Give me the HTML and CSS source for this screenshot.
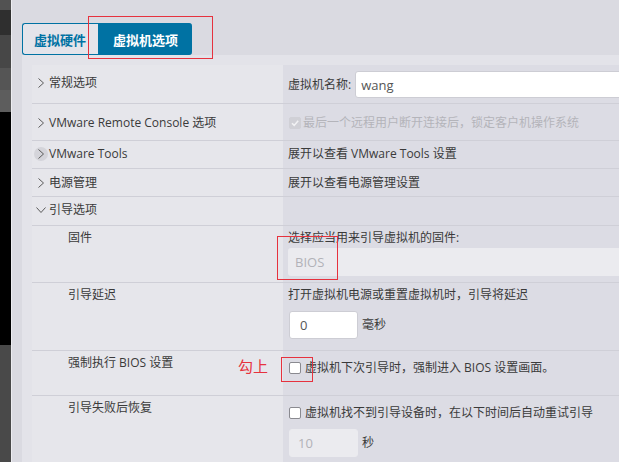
FILE: index.html
```html
<!DOCTYPE html>
<html lang="zh-CN">

<head>
    <meta charset="UTF-8">
    <title>编辑设置 - 虚拟机选项</title>
    <link rel="stylesheet" href="styles.css">
</head>

<body>
    <div class="page">
        <div class="side">
            <div class="side-a"></div>
            <div class="side-b"></div>
            <div class="side-c"></div>
            <div class="side-d"></div>
            <div class="side-e"></div>
            <div class="side-f"></div>
            <div class="side-g"></div>
        </div>

        <div class="main">
            <div class="tabs">
                <button class="tab">虚拟硬件</button>
                <button class="tab tab-active">虚拟机选项</button>
            </div>

            <div class="panel">
                <div class="row r1">
                    <div class="cell-l">
                        <span class="lbl"><span class="chev"><svg width="6" height="10" viewBox="0 0 6 10"><path d="M0.5 0.5 L5.5 5 L0.5 9.5" /></svg></span>常规选项</span>
                    </div>
                    <div class="cell-r">
                        <span class="field-name">虚拟机名称:</span>
                        <input class="txt txt-name" type="text" value="wang">
                    </div>
                </div>

                <div class="row r2">
                    <div class="cell-l">
                        <span class="lbl"><span class="chev"><svg width="6" height="10" viewBox="0 0 6 10"><path d="M0.5 0.5 L5.5 5 L0.5 9.5" /></svg></span>VMware Remote Console 选项</span>
                    </div>
                    <div class="cell-r">
                        <span class="check-line muted">
                            <span class="box box-on"><svg width="10" height="10" viewBox="0 0 10 10"><path d="M2 5.2 L4.2 7.4 L8.2 2.8" /></svg></span>
                            最后一个远程用户断开连接后，锁定客户机操作系统
                        </span>
                    </div>
                </div>

                <div class="row r3">
                    <div class="cell-l">
                        <span class="lbl"><span class="chev chev-hover"><svg width="6" height="10" viewBox="0 0 6 10"><path d="M0.5 0.5 L5.5 5 L0.5 9.5" /></svg></span>VMware Tools</span>
                    </div>
                    <div class="cell-r">展开以查看 VMware Tools 设置</div>
                </div>

                <div class="row r4">
                    <div class="cell-l">
                        <span class="lbl"><span class="chev"><svg width="6" height="10" viewBox="0 0 6 10"><path d="M0.5 0.5 L5.5 5 L0.5 9.5" /></svg></span>电源管理</span>
                    </div>
                    <div class="cell-r">展开以查看电源管理设置</div>
                </div>

                <div class="row r5">
                    <div class="cell-l">
                        <span class="lbl"><span class="chev"><svg width="10" height="6" viewBox="0 0 10 6"><path d="M0.5 0.5 L5 5.5 L9.5 0.5" /></svg></span>引导选项</span>
                    </div>
                    <div class="cell-r"></div>
                </div>

                <div class="row r6">
                    <div class="cell-l sub">固件</div>
                    <div class="cell-r">
                        <div class="line">选择应当用来引导虚拟机的固件:</div>
                        <div class="select">BIOS</div>
                    </div>
                </div>

                <div class="row r7">
                    <div class="cell-l sub">引导延迟</div>
                    <div class="cell-r">
                        <div class="line">打开虚拟机电源或重置虚拟机时，引导将延迟</div>
                        <div class="unit-row">
                            <input class="txt txt-small" type="text" value="0">
                            <span>毫秒</span>
                        </div>
                    </div>
                </div>

                <div class="row r8">
                    <div class="cell-l sub">强制执行 BIOS 设置</div>
                    <div class="cell-r">
                        <span class="check-line">
                            <span class="box"></span>虚拟机下次引导时，强制进入 BIOS 设置画面。
                        </span>
                    </div>
                </div>

                <div class="row r9">
                    <div class="cell-l sub">引导失败后恢复</div>
                    <div class="cell-r">
                        <span class="check-line">
                            <span class="box"></span>虚拟机找不到引导设备时，在以下时间后自动重试引导
                        </span>
                        <div class="unit-row">
                            <input class="txt txt-small txt-off" type="text" value="10" disabled>
                            <span>秒</span>
                        </div>
                    </div>
                </div>
            </div>
        </div>

        <!-- red annotations drawn over the screenshot -->
        <div class="mark mark-tab"></div>
        <div class="mark mark-bios"></div>
        <div class="mark mark-check"></div>
        <div class="mark-note">勾上</div>
    </div>
</body>

</html>
```

FILE: styles.css
```css
:root {
    --page-bg: #dadae1;
    --panel-bg: #e3e3e9;
    --cell-left: #e6e6eb;
    --cell-right: #dcdce4;
    --row-line: #cfcfd7;
    --text: #3a3a3a;
    --text-muted: #b4b4ba;
    --blue: #0072a3;
    --red: #e6323e;
}

html,
body {
    margin: 0;
    padding: 0;
    height: 462px;
    overflow: hidden;
    background: var(--page-bg);
}

body {
    font-family: "Open Sans", "Noto Sans CJK SC", sans-serif;
    font-size: 12px;
    color: var(--text);
}

.page {
    position: relative;
    display: flex;
    width: 619px;
    height: 462px;
    overflow: hidden;
}

/* dark strip on the far left */
.side {
    width: 11px;
    flex: none;
    display: flex;
    flex-direction: column;
}

.side-a { height: 10px; background: #525252; }
.side-b { height: 25px; background: #2f2f2f; }
.side-c { height: 33px; background: #474747; }
.side-d { height: 22px; background: #555555; }
.side-e { height: 22px; background: #5d5d5d; }
.side-f { height: 233px; background: #000; }
.side-g { flex: 1; background: #494949; }

.main {
    flex: none;
    width: 720px;
    border-left: 1px solid #ededf1;
    padding: 23px 0 0 10px;
    box-sizing: border-box;
}

.tabs {
    display: flex;
    height: 32px;
}

.tab {
    font-family: "Noto Sans CJK SC", sans-serif;
    font-size: 13px;
    font-weight: 700;
    height: 32px;
    margin: 0;
    padding: 0 12px 0 11px;
    border: 1px solid var(--blue);
    border-right: none;
    border-radius: 3px 0 0 3px;
    background: #e4e4ea;
    color: var(--blue);
    cursor: pointer;
}

.tab-active {
    padding: 0 14px;
    border-radius: 0 3px 3px 0;
    background: var(--blue);
    color: #fff;
}

.panel {
    background: var(--panel-bg);
    padding: 10px 0 0 10px;
    height: 400px;
}

.row {
    display: grid;
    grid-template-columns: 251px 1fr;
    border-bottom: 1px solid var(--row-line);
    line-height: 18px;
}

.cell-l {
    background: var(--cell-left);
    padding-left: 2px;
}

.cell-r {
    background: var(--cell-right);
    padding-left: 5px;
    padding-right: 10px;
}

.lbl {
    display: flex;
    align-items: center;
    height: 18px;
    gap: 1px;
}

.chev {
    width: 14px;
    height: 14px;
    display: flex;
    align-items: center;
    justify-content: center;
    border-radius: 50%;
}

.chev svg path {
    fill: none;
    stroke: #5a5a5a;
    stroke-width: 1;
}

.chev-hover {
    background: #d4d4da;
}

.sub {
    padding-left: 36px;
}

/* row spacing */
.r1 .cell-l { padding-top: 9px; }
.r1 .cell-r {
    display: flex;
    align-items: center;
    padding-top: 6px;
    padding-bottom: 5px;
}

.r2 .cell-l,
.r2 .cell-r { padding-top: 10px; padding-bottom: 8px; }

.r3 .cell-l,
.r3 .cell-r { padding-top: 4px; padding-bottom: 5px; }

.r4 .cell-l,
.r4 .cell-r { padding-top: 5px; padding-bottom: 4px; }

.r5 .cell-l,
.r5 .cell-r { padding-top: 4px; padding-bottom: 6px; }

.r6 .cell-l,
.r7 .cell-l,
.r8 .cell-l,
.r9 .cell-l { padding-top: 3px; }

.r6 .cell-r { padding-top: 3px; padding-bottom: 6px; }
.r7 .cell-r { padding-top: 3px; padding-bottom: 11px; }
.r8 .cell-r { padding-top: 8px; padding-bottom: 18px; }
.r9 .cell-r { padding-top: 8px; padding-bottom: 20px; }

.field-name {
    margin-right: 4px;
}

.txt {
    box-sizing: border-box;
    font-family: inherit;
    font-size: 13px;
    color: #555;
    background: #fff;
    border: 1px solid #cdcdd4;
    border-radius: 3px;
    outline: none;
    margin: 0;
}

.txt-name {
    flex: 1;
    height: 27px;
    padding: 0 5px;
}

.select {
    box-sizing: border-box;
    margin-top: 1px;
    height: 28px;
    line-height: 28px;
    padding-left: 7px;
    background: #ebebef;
    border-radius: 3px;
    color: #b2b2b8;
    font-size: 13px;
}

.unit-row {
    display: flex;
    align-items: center;
    gap: 4px;
    margin-top: 7px;
}

.txt-small {
    width: 69px;
    height: 28px;
    margin-left: 1px;
    padding: 0 10px;
}

.txt-off {
    background: #ebebef;
    border-color: #ebebef;
    color: #b2b2b8;
    padding-left: 8px;
}

.check-line {
    display: flex;
    align-items: center;
    height: 18px;
}

.box {
    box-sizing: border-box;
    width: 12px;
    height: 12px;
    margin: 0 4px 0 1px;
    background: #fff;
    border: 1px solid #8a8a90;
    border-radius: 2px;
    display: flex;
    align-items: center;
    justify-content: center;
}

.box-on {
    background: #d0d0d6;
    border-color: #d0d0d6;
    margin-right: 2px;
}

.box-on svg path {
    fill: none;
    stroke: #f2f2f4;
    stroke-width: 1.6;
}

.muted {
    color: var(--text-muted);
}

/* annotations */
.mark {
    position: absolute;
    box-sizing: border-box;
    border: 1px solid var(--red);
}

.mark-tab { left: 88px; top: 16px; width: 125px; height: 43px; }
.mark-bios { left: 277px; top: 236px; width: 61px; height: 44px; }
.mark-check { left: 281px; top: 357px; width: 32px; height: 25px; }

.mark-note {
    position: absolute;
    left: 238px;
    top: 356px;
    font-family: "Noto Sans CJK SC", sans-serif;
    font-size: 15px;
    line-height: 20px;
    color: var(--red);
}
```
